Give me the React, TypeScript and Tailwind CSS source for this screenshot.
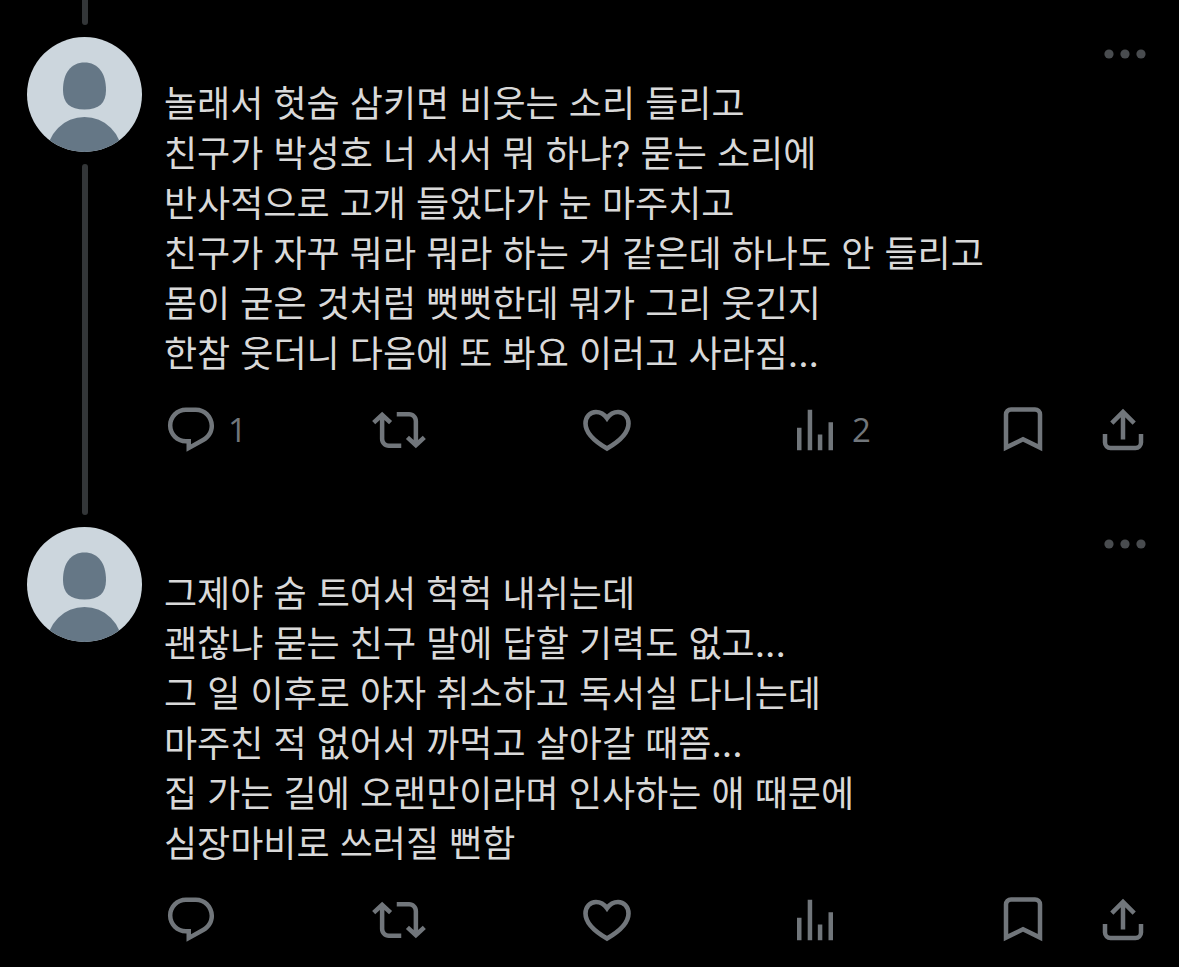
import type { ReactNode } from "react";

type Post = {
  id: number;
  lines: string[];
  replies?: number;
  views?: number;
};

const posts: Post[] = [
  {
    id: 1,
    lines: [
      "놀래서 헛숨 삼키면 비웃는 소리 들리고",
      "친구가 박성호 너 서서 뭐 하냐? 묻는 소리에",
      "반사적으로 고개 들었다가 눈 마주치고",
      "친구가 자꾸 뭐라 뭐라 하는 거 같은데 하나도 안 들리고",
      "몸이 굳은 것처럼 뻣뻣한데 뭐가 그리 웃긴지",
      "한참 웃더니 다음에 또 봐요 이러고 사라짐...",
    ],
    replies: 1,
    views: 2,
  },
  {
    id: 2,
    lines: [
      "그제야 숨 트여서 헉헉 내쉬는데",
      "괜찮냐 묻는 친구 말에 답할 기력도 없고...",
      "그 일 이후로 야자 취소하고 독서실 다니는데",
      "마주친 적 없어서 까먹고 살아갈 때쯤...",
      "집 가는 길에 오랜만이라며 인사하는 애 때문에",
      "심장마비로 쓰러질 뻔함",
    ],
  },
];

function Avatar() {
  return (
    <svg
      viewBox="0 0 115 115"
      className="size-[115px] shrink-0 rounded-full bg-[#ccd6dd]"
      aria-hidden="true"
    >
      <path
        d="M57.5 25.5C71 25.5 79 36 79 53C79 66 72 72.500 57.5 72.500C43 72.500 36 66 36 53C36 36 44 25.5 57.5 25.5z"
        fill="#657786"
      />
      <circle cx="57.5" cy="117.4" r="37.4" fill="#657786" />
    </svg>
  );
}

function ReplyIcon() {
  return (
    <svg viewBox="0 0 24 24" className="size-[54px] shrink-0" fill="currentColor">
      <path d="M1.751 10c0-4.42 3.584-8 8.005-8h4.366c4.49 0 8.129 3.64 8.129 8.13 0 2.96-1.607 5.68-4.196 7.11l-8.054 4.46v-3.69h-.067c-4.49.1-8.183-3.51-8.183-8.01zm8.005-6c-3.317 0-6.005 2.69-6.005 6 0 3.37 2.77 6.08 6.138 6.01l.351-.01h1.761v2.3l5.087-2.81c1.951-1.08 3.163-3.13 3.163-5.36 0-3.39-2.744-6.13-6.129-6.13H9.756z" />
    </svg>
  );
}

function RepostIcon() {
  return (
    <svg viewBox="0 0 24 24" className="size-[54px] shrink-0" fill="currentColor">
      <path d="M4.5 3.88l4.432 4.14-1.364 1.46L5.5 7.55V16c0 1.1.896 2 2 2H13v2H7.5c-2.209 0-4-1.79-4-4V7.55L1.432 9.48.068 8.02 4.5 3.88zM16.5 6H11V4h5.5c2.209 0 4 1.79 4 4v8.45l2.068-1.93 1.364 1.46-4.432 4.14-4.432-4.14 1.364-1.46 2.068 1.93V8c0-1.1-.896-2-2-2z" />
    </svg>
  );
}

function LikeIcon() {
  return (
    <svg
      viewBox="0 0 54 54"
      className="size-[54px] shrink-0"
      fill="none"
      stroke="currentColor"
      strokeWidth="4.6"
    >
      <path d="M27 15.2C24 11 20 9 16 9C10 9 5.5 14 5.5 20.5C5.5 30 14 38 27 45.5C40 38 48.5 30 48.5 20.5C48.5 14 44 9 38 9C34 9 30 11 27 15.2z" />
    </svg>
  );
}

function ViewsIcon() {
  return (
    <svg viewBox="0 0 24 24" className="size-[54px] shrink-0" fill="currentColor">
      <path d="M8.75 21V3h2v18h-2zM18 21V8.5h2V21h-2zM4 21V11h2v10H4zm9.25 0v-7h2v7h-2z" />
    </svg>
  );
}

function BookmarkIcon() {
  return (
    <svg
      viewBox="0 0 54 54"
      className="size-[54px] shrink-0"
      fill="none"
      stroke="currentColor"
      strokeWidth="4.5"
    >
      <path d="M10 44.6V11.5a5 5 0 0 1 5-5h24a5 5 0 0 1 5 5V44.6L27 36.2z" />
    </svg>
  );
}

function ShareIcon() {
  return (
    <svg
      viewBox="0 0 54 54"
      className="size-[54px] shrink-0"
      fill="none"
      stroke="currentColor"
      strokeWidth="4.5"
    >
      <path d="M9 31v8.5a5.5 5.5 0 0 0 5.5 5.5h25a5.5 5.5 0 0 0 5.5-5.5V31" />
      <path d="M27 36.5V9.5M15.8 20.2L27 9l11.2 11.2" />
    </svg>
  );
}

function Action({
  label,
  count,
  children,
}: {
  label: string;
  count?: number;
  children: ReactNode;
}) {
  return (
    <button aria-label={label} className="flex items-center gap-2.5">
      {children}
      {count !== undefined && (
        <span className="font-['Open_Sans',sans-serif] text-[33px] leading-[54px]">
          {count}
        </span>
      )}
    </button>
  );
}

function PostItem({ post, isLast }: { post: Post; isLast: boolean }) {
  return (
    <article className="flex gap-[22px]">
      {/* Avatar and thread line */}
      <div className="flex flex-col items-center gap-3 pb-3">
        <Avatar />
        {!isLast && <div className="w-1.5 flex-1 rounded-full bg-[#333638]" />}
      </div>

      <div className={isLast ? "min-w-0 flex-1 pb-5" : "min-w-0 flex-1 pb-[70px]"}>
        <div className="flex h-[42px] items-start justify-end">
          <button aria-label="더 보기" className="text-[#494c4f]">
            <svg viewBox="0 0 50 34" className="h-[34px] w-[50px]" fill="currentColor">
              <circle cx="9" cy="17" r="4.6" />
              <circle cx="25" cy="17" r="4.6" />
              <circle cx="41" cy="17" r="4.6" />
            </svg>
          </button>
        </div>

        <p className="text-[36px] leading-[50px] text-[#d9d9d9]">
          {post.lines.map((line) => (
            <span key={line} className="block">
              {line}
            </span>
          ))}
        </p>

        <div className="mt-6 flex text-[#71767b]">
          <div className="grid flex-1 grid-cols-4">
            <Action label="답글" count={post.replies}>
              <ReplyIcon />
            </Action>
            <Action label="재게시">
              <RepostIcon />
            </Action>
            <Action label="마음에 들어요">
              <LikeIcon />
            </Action>
            <Action label="조회수" count={post.views}>
              <ViewsIcon />
            </Action>
          </div>
          <div className="flex gap-[46px]">
            <Action label="북마크">
              <BookmarkIcon />
            </Action>
            <Action label="공유">
              <ShareIcon />
            </Action>
          </div>
        </div>
      </div>
    </article>
  );
}

export default function App() {
  return (
    <main
      lang="ko"
      className="min-h-screen bg-black pr-[29px] pl-[27px] font-['Inter','Noto_Sans_CJK_KR',sans-serif]"
    >
      {/* End of the line from the previous post */}
      <div className="mb-3 flex w-[115px] justify-center">
        <div className="h-[25px] w-1.5 rounded-b-full bg-[#333638]" />
      </div>
      {posts.map((post, index) => (
        <PostItem key={post.id} post={post} isLast={index === posts.length - 1} />
      ))}
    </main>
  );
}
